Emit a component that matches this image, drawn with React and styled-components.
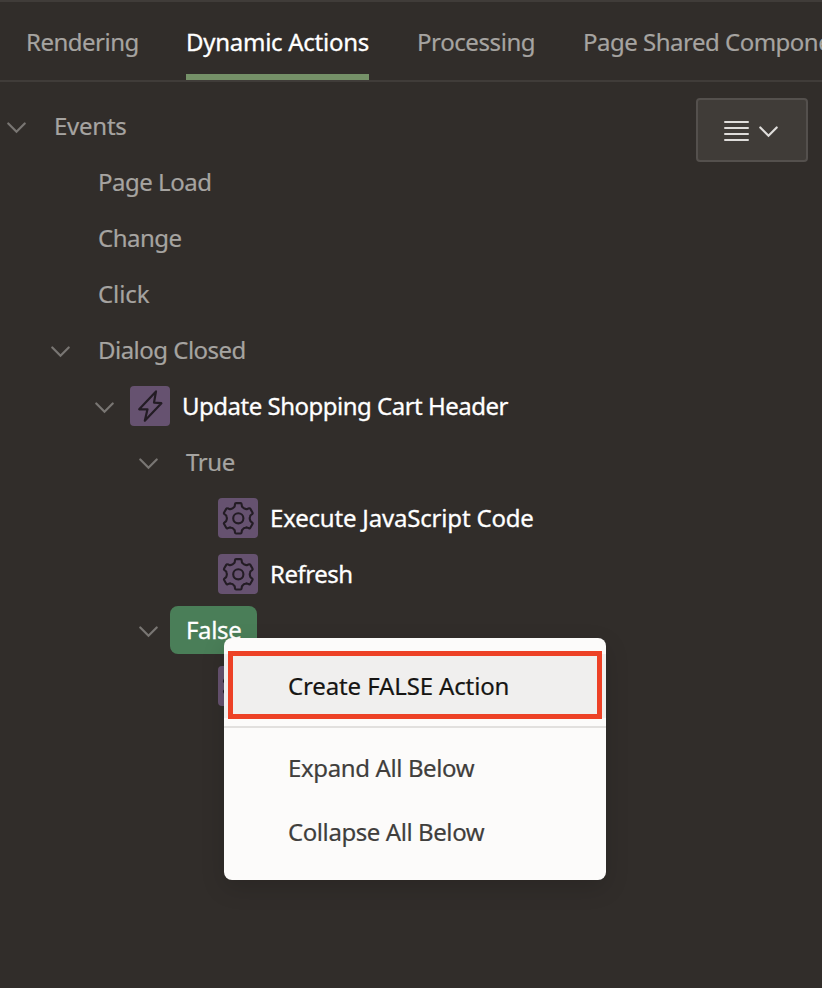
import React from "react";
import styled, { createGlobalStyle, css } from "styled-components";

const GlobalStyle = createGlobalStyle`
  *, *::before, *::after { box-sizing: border-box; }
  body {
    margin: 0;
    background: #312d2a;
    overflow: hidden;
    font-family: "Noto Sans", "Open Sans", sans-serif;
    font-size: 24px;
    -webkit-text-stroke: 0.2px currentColor;
  }
`;

const Panel = styled.main`
  display: flex;
  flex-direction: column;
  width: 100%;
  height: 100vh;
  overflow: hidden;
  background: #312d2a;
  border-top: 2px solid #403c39;
`;

const TabBar = styled.nav`
  display: flex;
  flex: none;
  gap: 48px;
  height: 80px;
  padding-left: 26px;
  border-bottom: 2px solid #403c39;
  overflow: hidden;
`;

const Tab = styled.button`
  flex: none;
  display: flex;
  align-items: center;
  width: ${(p) => (p.$width ? `${p.$width}px` : "auto")};
  padding: 6px 0 0;
  border: 0;
  border-bottom: 6px solid ${(p) => (p.$active ? "#759168" : "transparent")};
  background: none;
  color: ${(p) => (p.$active ? "#ffffff" : "#a6a4a1")};
  font: inherit;
  letter-spacing: ${(p) => p.$track}px;
  white-space: nowrap;
  ${(p) => p.$active && css`-webkit-text-stroke: 0.3px currentColor;`}
`;

const Body = styled.section`
  display: flex;
  flex: 1;
  align-items: flex-start;
  padding: 16px 14px 0 0;
`;

const Tree = styled.div`
  flex: 1;
  min-width: 0;
`;

const TreeRow = styled.div`
  display: flex;
  align-items: center;
  height: 56px;
  padding-left: ${(p) => p.$level * 44}px;
`;

const Toggle = styled.span`
  flex: none;
  display: flex;
  justify-content: center;
  width: 32px;
  padding: 3px 0 0 1px;
  margin-right: ${(p) => (p.$beforeIcon ? 10 : 6)}px;
  color: #797673;
`;

const Node = styled.span`
  position: relative;
  display: flex;
  align-items: center;
  height: 48px;
  padding: 0 16px;
  border-radius: 8px;
  color: #a6a4a1;
  white-space: nowrap;

  ${(p) =>
    p.$hasIcon &&
    css`
      gap: 12px;
      padding: 0;
      color: #ffffff;
      -webkit-text-stroke: 0.3px currentColor;
    `}

  ${(p) =>
    p.$selected &&
    css`
      width: 87px;
      background: #4a7e58;
      color: #ffffff;
    `}
`;

const NodeText = styled.span`
  padding-bottom: 2px;
  letter-spacing: ${(p) => p.$track}px;
  ${(p) => p.$bold && css`-webkit-text-stroke: 0.3px currentColor;`}
`;

const IconTile = styled.span`
  flex: none;
  display: flex;
  width: 40px;
  height: 40px;
  border-radius: 4px;
  background: #665270;
  color: #231c24;
`;

const ViewButton = styled.button`
  flex: none;
  display: flex;
  align-items: center;
  justify-content: center;
  gap: 10px;
  width: 112px;
  height: 64px;
  padding: 1px 2px 0 0;
  border: 2px solid #54504d;
  border-radius: 4px;
  background: #403c38;
  color: #dfdddb;

  svg:last-child {
    margin-top: 2px;
  }
`;

const ContextMenu = styled.div`
  position: absolute;
  z-index: 2;
  left: 54px;
  top: 32px;
  width: 382px;
  height: 242px;
  padding: 16px 0;
  border-radius: 8px;
  background: #fcfbfa;
  box-shadow: 0 8px 24px rgba(0, 0, 0, 0.14);
`;

const MenuItem = styled.div`
  position: relative;
  display: flex;
  align-items: center;
  height: 64px;
  padding: 0 0 2px 64px;
  background: ${(p) => (p.$active ? "#f0efee" : "transparent")};
  color: ${(p) => (p.$active ? "#161513" : "#403e3c")};
  letter-spacing: ${(p) => p.$track}px;
`;

const Highlight = styled.span`
  position: absolute;
  inset: -3px 4px -1px;
  border: 5px solid #ed4126;
`;

const Divider = styled.hr`
  height: 2px;
  margin: 8px 0;
  border: 0;
  background: #e2e0de;
`;

const Chevron = () => (
  <svg width="19" height="12" viewBox="0 0 19 12" fill="none" stroke="currentColor" strokeWidth="2.2" strokeLinecap="round">
    <path d="M1.3 1.5 9.5 9.7l8.2-8.2" />
  </svg>
);

const Lines = () => (
  <svg width="25" height="22" viewBox="0 0 25 22" fill="none" stroke="currentColor" strokeWidth="2" strokeLinecap="round">
    <path d="M1 2h23M1 8h23M1 14h23M1 20h23" />
  </svg>
);

const Bolt = () => (
  <svg width="40" height="40" viewBox="0 0 40 40" fill="none" stroke="currentColor" strokeWidth="2.2" strokeLinejoin="round">
    <path d="M26 5.4 9.2 23.3h8.3L14.8 34.8 31.4 17.2l-7.4-.6z" />
  </svg>
);

const GEAR_CENTER = 20.3;

const gearPoint = (radius, degrees) => {
  const a = (degrees * Math.PI) / 180;
  return `${(GEAR_CENTER + radius * Math.sin(a)).toFixed(2)},${(GEAR_CENTER - radius * Math.cos(a)).toFixed(2)}`;
};

const GEAR_OUTLINE = [0, 60, 120, 180, 240, 300]
  .map((t) => {
    const move = t === 0 ? "M" : "L";
    return [
      `${move}${gearPoint(11.8, t - 23)}`,
      `L${gearPoint(12.4, t - 17)}`,
      `L${gearPoint(14.6, t - 13)}`,
      `Q${gearPoint(15.5, t - 12)} ${gearPoint(15.3, t - 8)}`,
      `L${gearPoint(15.3, t + 8)}`,
      `Q${gearPoint(15.5, t + 12)} ${gearPoint(14.6, t + 13)}`,
      `L${gearPoint(12.4, t + 17)}`,
      `L${gearPoint(11.8, t + 23)}`,
      `Q${gearPoint(11.1, t + 30)} ${gearPoint(11.8, t + 37)}`,
    ].join(" ");
  })
  .join(" ");

const Gear = () => (
  <svg width="40" height="40" viewBox="0 0 40 40" fill="none" stroke="currentColor" strokeWidth="2.1" strokeLinejoin="round">
    <circle cx={GEAR_CENTER} cy={GEAR_CENTER} r="5.1" />
    <path d={`${GEAR_OUTLINE} Z`} />
  </svg>
);

const tabs = [
  { label: "Rendering", width: 112, track: -0.5 },
  { label: "Dynamic Actions", width: 183, track: -0.27, active: true },
  { label: "Processing", width: 118, track: -0.41 },
  { label: "Page Shared Components", track: -0.5 },
];

const nodes = [
  { label: "Events", level: 0, open: true, track: -0.25 },
  { label: "Page Load", level: 1, track: -0.48 },
  { label: "Change", level: 1, track: -0.5 },
  { label: "Click", level: 1, track: -0.1 },
  { label: "Dialog Closed", level: 1, open: true, track: -0.52 },
  { label: "Update Shopping Cart Header", level: 2, open: true, icon: Bolt, track: -0.5 },
  { label: "True", level: 3, open: true, track: -0.4 },
  { label: "Execute JavaScript Code", level: 4, icon: Gear, track: -0.19 },
  { label: "Refresh", level: 4, icon: Gear, track: -0.48 },
  { label: "False", level: 3, open: true, selected: true, track: -0.35 },
  { label: "", level: 4, icon: Gear, track: 0 },
];

const FalseMenu = () => (
  <ContextMenu role="menu">
    <MenuItem role="menuitem" $active $track={-0.13}>
      Create FALSE Action
      <Highlight />
    </MenuItem>
    <Divider />
    <MenuItem role="menuitem" $track={-0.38}>Expand All Below</MenuItem>
    <MenuItem role="menuitem" $track={-0.42}>Collapse All Below</MenuItem>
  </ContextMenu>
);

const TreeNode = ({ label, level, open, icon: Icon, selected, track }) => (
  <TreeRow $level={level}>
    <Toggle $beforeIcon={!!Icon}>{open && <Chevron />}</Toggle>
    <Node $hasIcon={!!Icon} $selected={selected}>
      {Icon && (
        <IconTile>
          <Icon />
        </IconTile>
      )}
      <NodeText $track={track} $bold={selected}>{label}</NodeText>
      {selected && <FalseMenu />}
    </Node>
  </TreeRow>
);

export default function App() {
  return (
    <Panel>
      <GlobalStyle />
      <TabBar>
        {tabs.map((t) => (
          <Tab key={t.label} $width={t.width} $track={t.track} $active={t.active}>
            {t.label}
          </Tab>
        ))}
      </TabBar>
      <Body>
        <Tree>
          {nodes.map((n, i) => (
            <TreeNode key={i} {...n} />
          ))}
        </Tree>
        <ViewButton aria-label="View options">
          <Lines />
          <Chevron />
        </ViewButton>
      </Body>
    </Panel>
  );
}
